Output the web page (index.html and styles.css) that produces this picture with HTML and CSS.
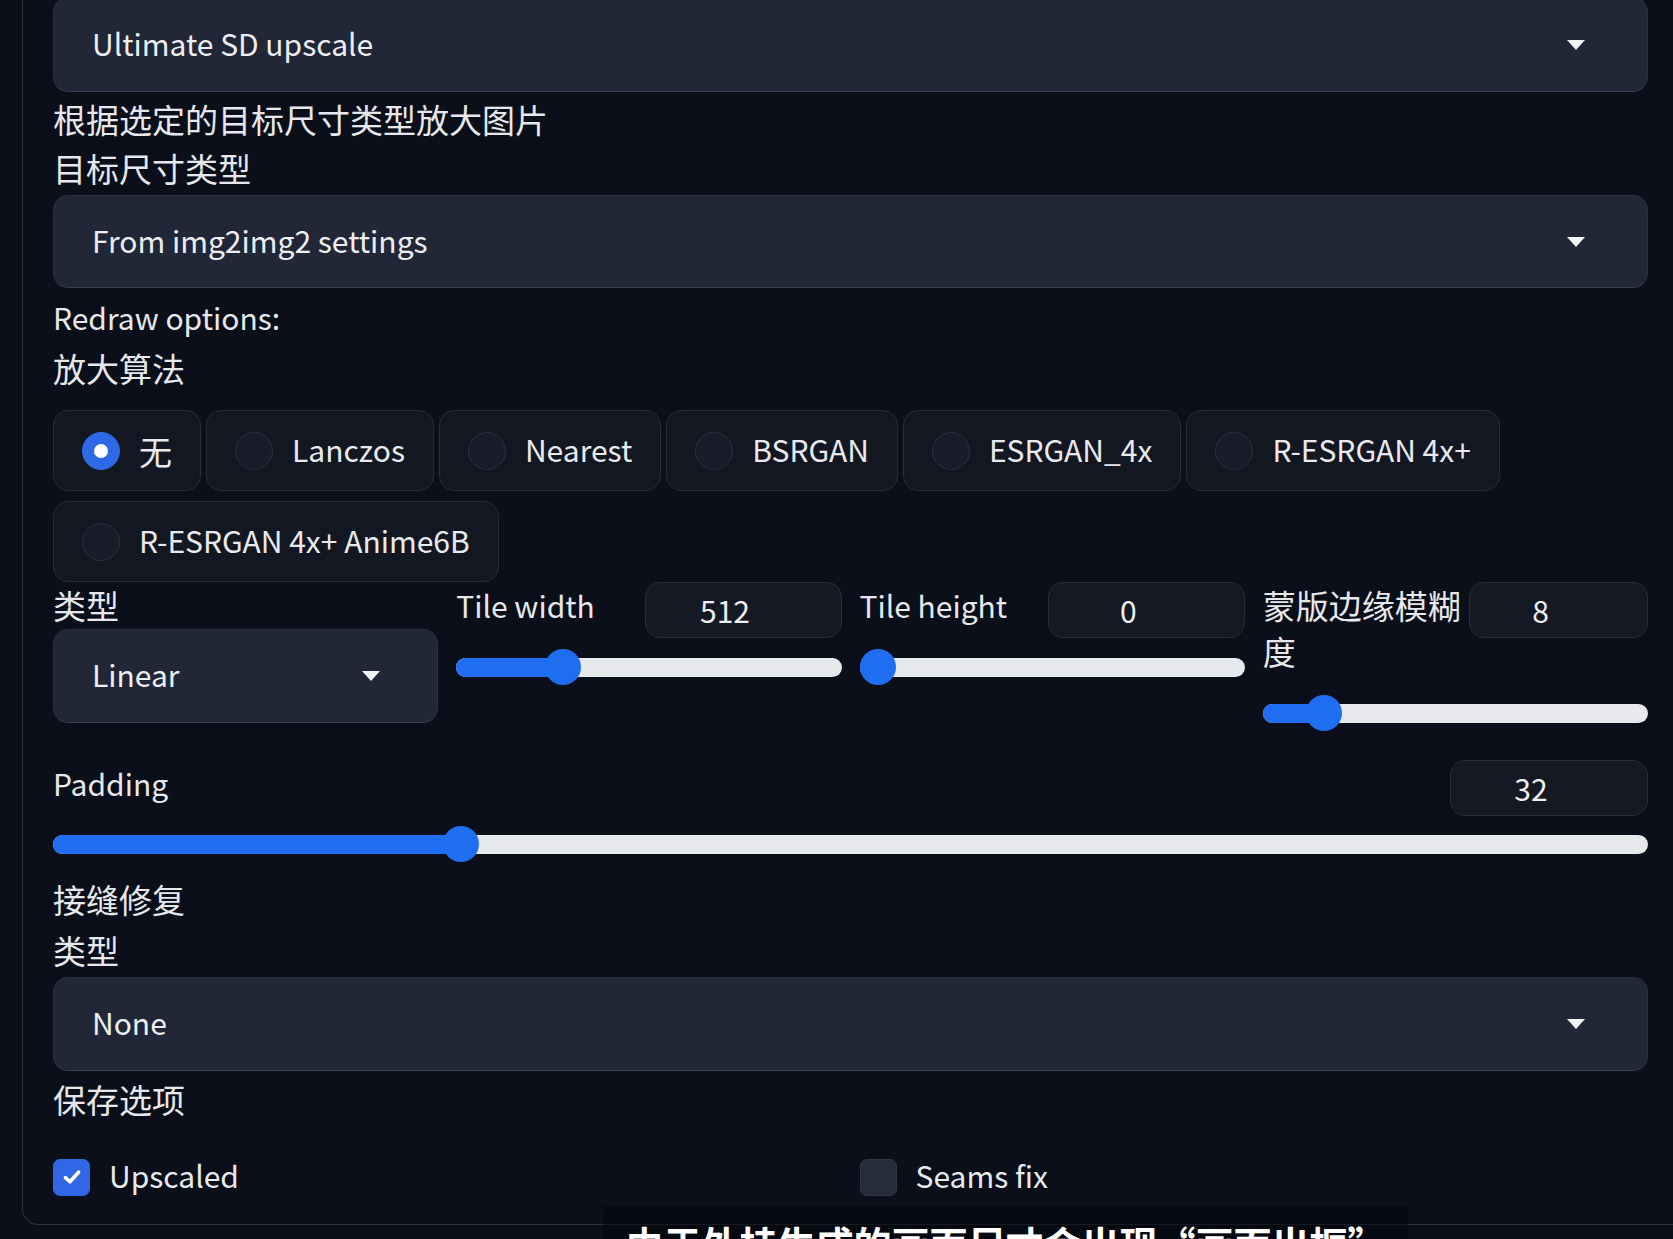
FILE: index.html
```html
<!DOCTYPE html>
<html lang="zh">
<head>
<meta charset="utf-8">
<title>Ultimate SD upscale</title>
<link rel="stylesheet" href="styles.css">
</head>
<body>
<div class="page">
  <div class="panel">
    <div class="dropdown dd-first">
      <span class="en">Ultimate SD upscale</span>
      <span class="caret"></span>
    </div>
    <div class="line info">根据选定的目标尺寸类型放大图片</div>
    <div class="line">目标尺寸类型</div>
    <div class="dropdown dd-second">
      <span class="en">From img2img2 settings</span>
      <span class="caret"></span>
    </div>
    <div class="line redraw"><span class="en">Redraw options:</span></div>
    <div class="line tight">放大算法</div>

    <div class="radios">
      <label class="radio checked"><span class="dot"></span><span>无</span></label>
      <label class="radio"><span class="dot"></span><span class="en">Lanczos</span></label>
      <label class="radio"><span class="dot"></span><span class="en">Nearest</span></label>
      <label class="radio"><span class="dot"></span><span class="en">BSRGAN</span></label>
      <label class="radio"><span class="dot"></span><span class="en">ESRGAN_4x</span></label>
      <label class="radio"><span class="dot"></span><span class="en">R-ESRGAN 4x+</span></label>
      <label class="radio"><span class="dot"></span><span class="en">R-ESRGAN 4x+ Anime6B</span></label>
    </div>

    <div class="grid4">
      <div class="col">
        <div class="flabel">类型</div>
        <div class="dropdown dd-small">
          <span class="en">Linear</span>
          <span class="caret"></span>
        </div>
      </div>
      <div class="col">
        <div class="fhead">
          <div class="flabel"><span class="en">Tile width</span></div>
          <div class="num"><span class="en">512</span></div>
        </div>
        <div class="slider"><div class="track"><div class="fill" style="width:27.6%"></div></div><span class="thumb" style="left:27.6%"></span></div>
      </div>
      <div class="col">
        <div class="fhead">
          <div class="flabel"><span class="en">Tile height</span></div>
          <div class="num"><span class="en">0</span></div>
        </div>
        <div class="slider"><div class="track"><div class="fill" style="width:4.7%"></div></div><span class="thumb" style="left:4.7%"></span></div>
      </div>
      <div class="col">
        <div class="fhead">
          <div class="flabel wrap">蒙版边缘模糊度</div>
          <div class="num narrow"><span class="en">8</span></div>
        </div>
        <div class="slider low"><div class="track"><div class="fill" style="width:16%"></div></div><span class="thumb" style="left:16%"></span></div>
      </div>
    </div>

    <div class="padblock">
      <div class="fhead">
        <div class="flabel"><span class="en">Padding</span></div>
        <div class="num"><span class="en">32</span></div>
      </div>
      <div class="slider pad"><div class="track"><div class="fill" style="width:25.6%"></div></div><span class="thumb" style="left:25.6%"></span></div>
    </div>

    <div class="line seams">接缝修复</div>
    <div class="line tight">类型</div>
    <div class="dropdown dd-third">
      <span class="en">None</span>
      <span class="caret"></span>
    </div>
    <div class="line save">保存选项</div>

    <div class="checks">
      <label class="check on"><span class="box"><svg viewBox="0 0 20 20" width="24" height="24"><path d="M4.5 10.5 L8.3 14 L15.5 6" fill="none" stroke="#ffffff" stroke-width="3" stroke-linecap="round" stroke-linejoin="round"/></svg></span><span class="en">Upscaled</span></label>
      <label class="check"><span class="box"></span><span class="en">Seams fix</span></label>
    </div>
  </div>

  <div class="subtitle"><span>由于外挂生成的画面尺寸会出现“画面出框”</span></div>
</div>
</body>
</html>
```

FILE: styles.css
```css
* { box-sizing: border-box; }

html, body {
  margin: 0;
  padding: 0;
}

body {
  width: 1673px;
  height: 1239px;
  overflow: hidden;
  background: #0b0f19;
  color: #e6e8ec;
  font-family: "Noto Sans CJK SC", "Noto Sans", sans-serif;
  font-size: 33px;
}

.en {
  font-size: 30px;
  padding-bottom: 4px;
  vertical-align: 2px;
}

.page {
  position: relative;
  height: 1239px;
  padding-left: 22px;
}

.panel {
  border-left: 1px solid #2b313e;
  border-bottom: 1px solid #2f3542;
  border-bottom-left-radius: 16px;
  padding: 0 25px 29px 30px;
}

.line {
  line-height: 49px;
  height: 49px;
  white-space: nowrap;
}
.info { margin-top: 3px; }
.redraw { margin-top: 5px; }
.tight { margin-top: 2px; }
.seams { margin-top: 13px; }
.save { margin-top: 4px; }

.dropdown {
  display: flex;
  align-items: center;
  justify-content: space-between;
  height: 93px;
  padding: 0 62px 0 38px;
  background: #212737;
  border: 1px solid #2a3040;
  border-bottom-color: #394052;
  border-radius: 15px;
  color: #eceef1;
}
.dd-first { margin-top: -3px; height: 95px; }
.dd-second { margin-top: 2px; }
.dd-third { margin-top: 2px; height: 94px; }
.dd-small { margin-top: 1px; height: 94px; padding: 0 57px 0 38px; }

.caret {
  width: 0;
  height: 0;
  border-left: 9px solid transparent;
  border-right: 9px solid transparent;
  border-top: 10px solid #f3f4f6;
}

.radios {
  margin-top: 17px;
  display: flex;
  flex-wrap: wrap;
  column-gap: 5px;
  row-gap: 10px;
}

.radio {
  display: flex;
  align-items: center;
  gap: 19px;
  height: 81px;
  padding: 0 28px;
  background: #131722;
  border: 1px solid #282d39;
  border-radius: 15px;
  color: #e8eaee;
}

.dot {
  width: 38px;
  height: 38px;
  border-radius: 50%;
  background: #181d29;
  border: 1px solid #2b3140;
  display: flex;
  align-items: center;
  justify-content: center;
}
.radio.checked .dot {
  background: #2e6ae6;
  border-color: #2e6ae6;
}
.radio.checked .dot::after {
  content: "";
  width: 14px;
  height: 14px;
  border-radius: 50%;
  background: #ffffff;
}

.grid4 {
  display: grid;
  grid-template-columns: repeat(4, 1fr);
  column-gap: 18px;
}

.col {
  display: flex;
  flex-direction: column;
}

.flabel {
  line-height: 46px;
  white-space: nowrap;
}
.flabel.wrap {
  white-space: normal;
  width: 200px;
}

.fhead {
  display: flex;
  justify-content: space-between;
  align-items: flex-start;
}

.num {
  width: 197px;
  height: 56px;
  line-height: 54px;
  text-align: center;
  padding-right: 36px;
  background: #141924;
  border: 1px solid #272d3a;
  border-radius: 15px;
  color: #eceef1;
  flex-shrink: 0;
}
.num.narrow { width: 179px; }

.slider {
  position: relative;
  height: 36px;
  margin-top: 11px;
  display: flex;
  align-items: center;
}
.slider.low { margin-top: 21px; }
.slider.pad { margin-top: 10px; }

.track {
  width: 100%;
  height: 19px;
  border-radius: 10px;
  background: #e7e8eb;
  overflow: hidden;
}
.fill {
  height: 100%;
  background: #1f6ef2;
}
.thumb {
  position: absolute;
  top: 0;
  width: 36px;
  height: 36px;
  margin-left: -18px;
  border-radius: 50%;
  background: #1f6ef2;
}

.padblock { margin-top: 29px; }
.padblock .num { width: 198px; }

.checks {
  margin-top: 35px;
  display: grid;
  grid-template-columns: 1fr 1fr;
  column-gap: 18px;
}
.check {
  display: flex;
  align-items: center;
  gap: 19px;
  height: 36px;
  color: #e8eaee;
}
.box {
  width: 37px;
  height: 37px;
  border-radius: 7px;
  background: #262c3a;
  border: 1px solid #323847;
  display: flex;
  align-items: center;
  justify-content: center;
}
.check.on .box {
  background: #2f67e6;
  border-color: #2f67e6;
}

.subtitle {
  position: absolute;
  left: 603px;
  top: 1209px;
  width: 805px;
  height: 60px;
  background: rgba(4, 5, 8, 0.55);
  border-radius: 4px;
  padding-top: 14px;
  text-align: center;
  overflow: hidden;
}
.subtitle span {
  font-size: 38px;
  font-weight: 700;
  color: #ffffff;
  white-space: nowrap;
  line-height: 46px;
}
```
